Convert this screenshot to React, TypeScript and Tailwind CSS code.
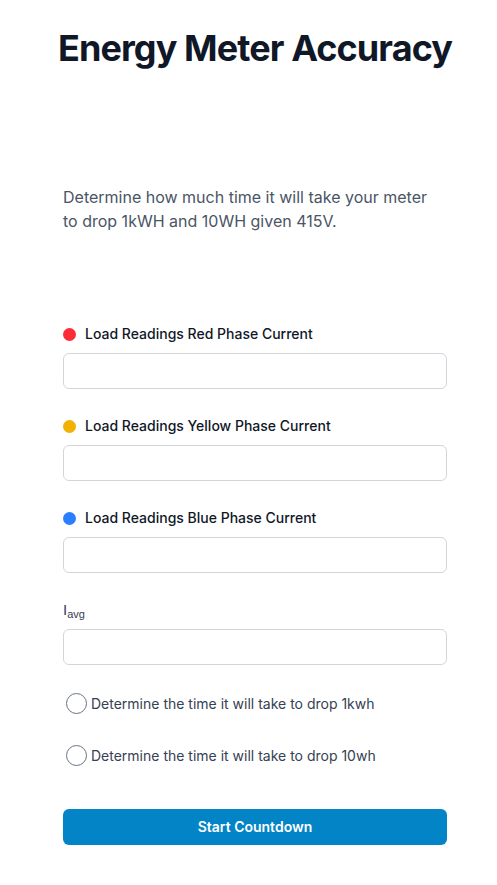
export default function App() {
  const phases = [
    { label: 'Load Readings Red Phase Current', dot: 'bg-red-500' },
    { label: 'Load Readings Yellow Phase Current', dot: 'bg-yellow-500' },
    { label: 'Load Readings Blue Phase Current', dot: 'bg-blue-500' },
  ];

  return (
    <div className="min-h-screen bg-white font-['Inter',sans-serif]">
      <div className="ml-[63px] w-[384px] pt-[26px]">
        <h1 className="text-center text-[36px] leading-[44px] font-bold tracking-tight text-gray-900 whitespace-nowrap -mx-4">
          Energy Meter Accuracy
        </h1>

        <p className="mt-[115px] pr-[14px] text-base leading-6 text-gray-600">
          Determine how much time it will take your meter to drop 1kWH and 10WH given 415V.
        </p>

        <div className="mt-[91px]">
          {phases.map(p => (
            <div key={p.label} className="mb-[27px]">
              <label className="flex items-center gap-[9px] text-sm leading-5 font-medium text-gray-900">
                <span className={`w-[13px] h-[13px] rounded-full ${p.dot}`} />
                {p.label}
              </label>
              <input type="text" className="mt-[9px] block w-full h-9 rounded-md border border-gray-300 bg-white px-3 text-sm" />
            </div>
          ))}

          <div>
            <label className="block h-5 text-[15px] leading-5 text-gray-700 font-['Liberation_Sans',sans-serif]">
              I<sub className="text-[11px]">avg</sub>
            </label>
            <input type="text" className="mt-[9px] block w-full h-9 rounded-md border border-gray-300 bg-white px-3 text-sm" />
          </div>

          <div className="pl-[3px] pt-[28px] space-y-[31px]">
            {['Determine the time it will take to drop 1kwh', 'Determine the time it will take to drop 10wh'].map(t => (
              <label key={t} className="flex items-center gap-[4px] text-sm leading-5 text-gray-700">
                <span className="w-[21px] h-[21px] rounded-full border border-gray-500 bg-white" />
                {t}
              </label>
            ))}
          </div>

          <button className="mt-[43px] w-full h-9 rounded-md bg-[#0284c7] text-white text-sm font-semibold">
            Start Countdown
          </button>
        </div>
      </div>
    </div>
  );
}
